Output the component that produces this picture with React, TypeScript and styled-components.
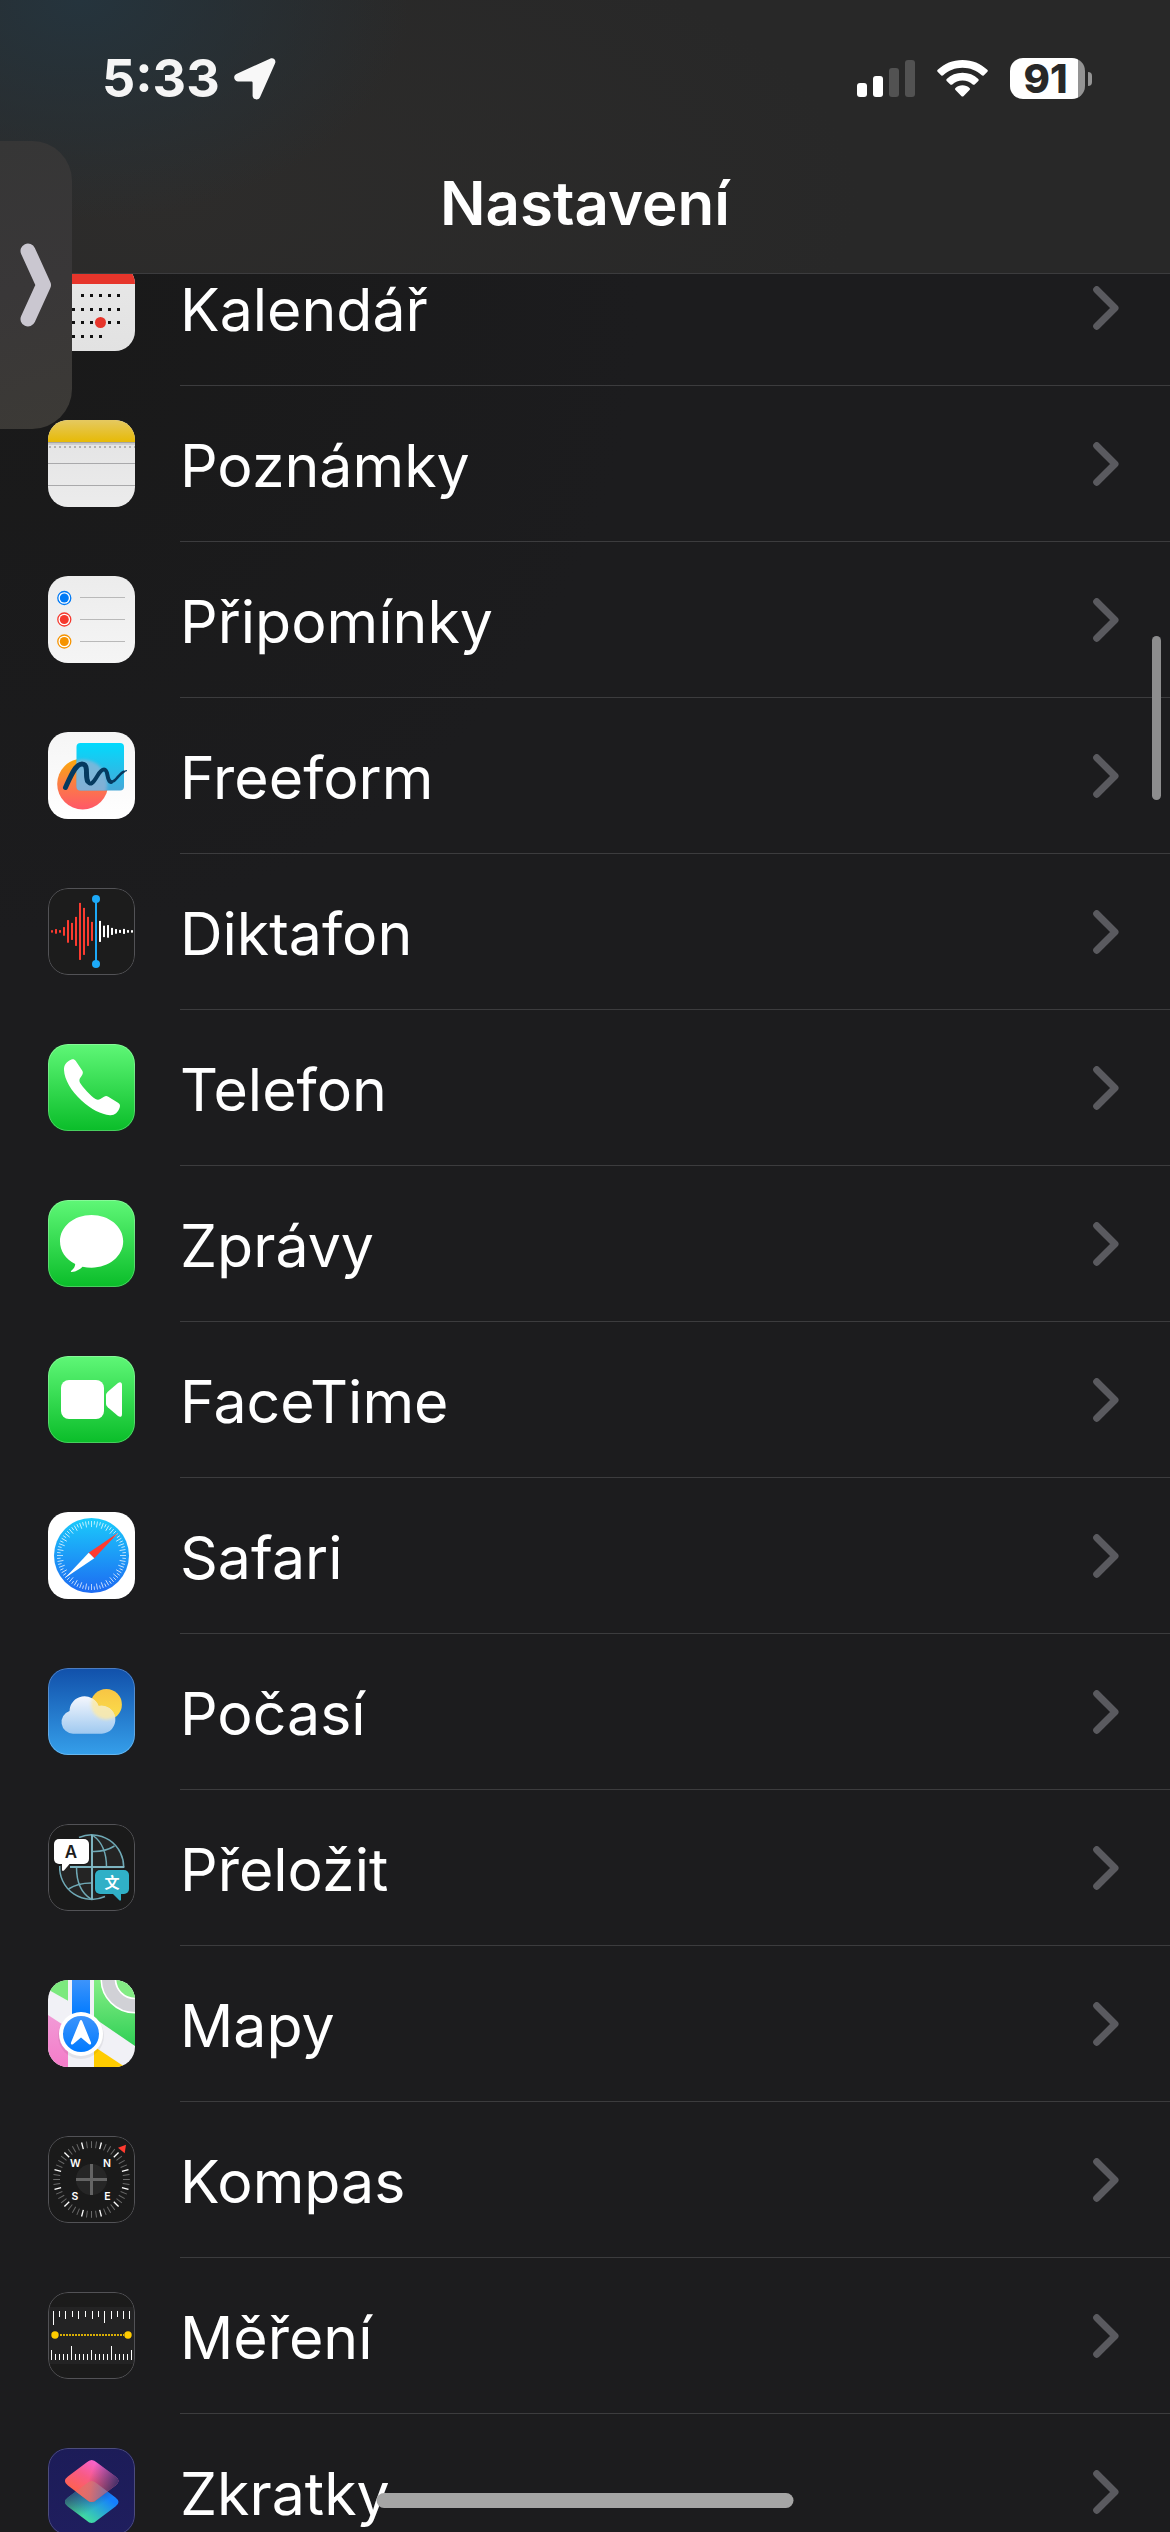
import React from "react";
import styled, { createGlobalStyle } from "styled-components";

const GlobalStyle = createGlobalStyle`
  *, *::before, *::after { box-sizing: border-box; }
  html, body { margin: 0; background: #1c1c1e; }
  body {
    font-family: Inter, "Liberation Sans", "Noto Sans CJK SC", sans-serif;
    color: #fff;
  }
`;

const Screen = styled.div`
  position: relative;
  display: flex;
  flex-direction: column;
  height: 100vh;
  overflow: hidden;
  background: radial-gradient(circle at 0 300px, #191919 0, #1c1c1e 640px);
`;

const Header = styled.header`
  flex: none;
  z-index: 1;
  border-bottom: 1px solid #3c3c3e;
  background:
    radial-gradient(ellipse 330px 220px at 80px 0, #25343d 0, rgba(37, 52, 61, 0) 100%),
    radial-gradient(ellipse 700px 300px at 160px 200px, #2d2c2b 0, #282828 100%);
`;

const StatusBar = styled.div`
  display: flex;
  align-items: center;
  justify-content: space-between;
  height: 141px;
  padding: 16px 78px 0 102px;
`;

const StatusGroup = styled.div<{ $gap: number }>`
  display: flex;
  align-items: center;
  gap: ${(p) => p.$gap}px;
`;

const Time = styled.time`
  font-size: 52px;
  line-height: 60px;
  font-weight: 700;
  color: #f5f5f5;
`;

const Battery = styled.div`
  display: flex;
  align-items: center;
  gap: 3px;
`;

const BatteryBody = styled.div`
  display: flex;
  align-items: center;
  justify-content: center;
  width: 75px;
  height: 41px;
  padding-right: 4px;
  border-radius: 13px;
  background: linear-gradient(to right, #fff 68px, #949494 68px);
  color: #282828;
  font-size: 40px;
  line-height: 41px;
  font-weight: 800;
`;

const BatteryTip = styled.div`
  width: 4px;
  height: 14px;
  border-radius: 0 7px 7px 0;
  background: #949494;
`;

const Title = styled.h1`
  margin: 0;
  height: 132px;
  padding-top: 22px;
  font-size: 60px;
  line-height: 80px;
  font-weight: 600;
  text-align: center;
`;

const List = styled.ul`
  flex: none;
  margin: -44px 0 0;
  padding: 0;
  list-style: none;
`;

const Row = styled.a`
  display: flex;
  align-items: stretch;
  gap: 45px;
  height: 156px;
  padding-left: 48px;
  color: inherit;
  text-decoration: none;
`;

const RowBody = styled.span`
  flex: 1;
  display: flex;
  align-items: center;
  justify-content: space-between;
  padding-right: 51px;
  border-bottom: 1px solid #3c3c3e;
`;

const Label = styled.span`
  padding-top: 4px;
  font-size: 59px;
  line-height: 80px;
  font-weight: 400;
`;

const IconBox = styled.svg`
  flex: none;
  display: block;
  width: 87px;
  height: 87px;
  margin-top: 34px;
  border-radius: 20px;
`;

const SideTab = styled.button`
  position: absolute;
  z-index: 2;
  left: 0;
  top: 141px;
  display: flex;
  align-items: center;
  justify-content: flex-end;
  width: 72px;
  height: 288px;
  padding: 0 20px 0 0;
  border: 0;
  border-radius: 0 40px 40px 0;
  background: linear-gradient(165deg, #363636 0, #393738 50%, #3c3a36 100%);
`;

const ScrollThumb = styled.div`
  position: absolute;
  z-index: 2;
  right: 9px;
  top: 636px;
  width: 9px;
  height: 164px;
  border-radius: 5px;
  background: #8d8d8e;
`;

const HomeIndicator = styled.div`
  position: absolute;
  z-index: 2;
  left: 50%;
  bottom: 24px;
  width: 417px;
  height: 15px;
  border-radius: 8px;
  background: #a5a5a5;
  transform: translateX(-50%);
`;

type IconProps = { id: string; from: string; to: string; edge?: string; children?: React.ReactNode };

/* Rounded app tile with a vertical background gradient and a hairline edge. */
function Tile({ id, from, to, edge, children }: IconProps) {
  return (
    <IconBox viewBox="0 0 87 87" aria-hidden="true">
      <defs>
        <linearGradient id={id} x1="0" y1="0" x2="0" y2="1">
          <stop offset="0" stopColor={from} />
          <stop offset="1" stopColor={to} />
        </linearGradient>
      </defs>
      <rect width="87" height="87" fill={`url(#${id})`} />
      {children}
      {edge && <rect x=".5" y=".5" width="86" height="86" rx="19.5" fill="none" stroke={edge} />}
    </IconBox>
  );
}

const DARK_EDGE = "#525256";

const calendarRows = [
  { y: 31.5, from: 2, to: 6 },
  { y: 45.5, from: 0, to: 6 },
  { y: 58.5, from: 0, to: 6 },
  { y: 72.5, from: 0, to: 4 },
];

const Calendar = () => (
  <Tile id="cal" from="#e8e8e8" to="#e2e2e2">
    <rect width="87" height="20" fill="#e6352b" />
    {calendarRows.map((r) =>
      Array.from({ length: r.to - r.from + 1 }, (_, i) => (
        <rect key={`${r.y}-${i}`} x={15 + (r.from + i) * 9} y={r.y - 1.5} width="3" height="3" fill="#111" />
      ))
    )}
    <circle cx="52.5" cy="58.5" r="5.5" fill="#e6352b" />
  </Tile>
);

const Notes = () => (
  <Tile id="notes" from="#e2e2e3" to="#ececec">
    <defs>
      <linearGradient id="notesTop" x1="0" y1="0" x2="0" y2="1">
        <stop offset="0" stopColor="#e5c961" />
        <stop offset="1" stopColor="#e7ba06" />
      </linearGradient>
    </defs>
    <rect width="87" height="22" fill="url(#notesTop)" />
    <rect y="22" width="87" height="1.5" fill="#a5a5a5" />
    <rect y="23.5" width="87" height="1.5" fill="#cfcfcf" />
    <path d="M1 27H87" stroke="#b2b2b2" strokeWidth="2" strokeDasharray="2 3" />
    <path d="M0 43.5H87M0 65.5H87" stroke="#a9a9ab" />
  </Tile>
);

const reminderRows = [
  { y: 22, line: 21.5, color: "#007af5" },
  { y: 43.5, line: 43.5, color: "#f5392e" },
  { y: 65.5, line: 65.5, color: "#f59300" },
];

const Reminders = () => (
  <Tile id="rem" from="#ececec" to="#f5f5f5">
    {reminderRows.map((r) => (
      <g key={r.color}>
        <circle cx="16.3" cy={r.y} r="6.5" fill="#fff" stroke={r.color} strokeWidth="1.3" />
        <circle cx="16.3" cy={r.y} r="4.5" fill={r.color} />
        <path d={`M32 ${r.line}H77`} stroke="#b9b9b9" />
      </g>
    ))}
  </Tile>
);

const Freeform = () => (
  <Tile id="free" from="#f5f5f5" to="#ffffff">
    <defs>
      <linearGradient id="freeSun" x1="0" y1="0" x2="0" y2="1">
        <stop offset="0" stopColor="#fbab09" />
        <stop offset=".5" stopColor="#fb7d45" />
        <stop offset="1" stopColor="#ff5768" />
      </linearGradient>
      <linearGradient id="freeSq" x1="0" y1="0" x2="0" y2="1">
        <stop offset="0" stopColor="#02dafd" />
        <stop offset="1" stopColor="#46a8d8" />
      </linearGradient>
      <clipPath id="freeClip">
        <rect x="28.5" y="11" width="47.5" height="47.5" rx="4" />
      </clipPath>
      <filter id="freeBlur">
        <feGaussianBlur stdDeviation="1.6" />
      </filter>
    </defs>
    <circle cx="34.7" cy="52" r="25.5" fill="url(#freeSun)" />
    <rect x="28.5" y="11" width="47.5" height="47.5" rx="4" fill="url(#freeSq)" />
    <g clipPath="url(#freeClip)">
      <circle cx="34.7" cy="52" r="24.5" fill="#a3b2d3" opacity=".65" filter="url(#freeBlur)" />
    </g>
    <g fill="none" stroke="#053a60" strokeLinecap="round" strokeLinejoin="round">
      <path d="M17.5 55.5C22 46 27 32 34 32C41 32 37 43 39.5 49" strokeWidth="5" />
      <path d="M38.5 42C39 50 41 53 44 51C49 47 51 37.5 56 37.5C61 37.5 58 49 63 50" strokeWidth="4" />
      <path d="M60.5 47C62 51.5 66 50 69 46C71.5 43 73 41 75.5 39.8" strokeWidth="2.6" />
      <path d="M73 41.5C75 39.8 77 39 78.5 38.7" strokeWidth="1.2" />
    </g>
  </Tile>
);

const waveLeft = [1.2, 2.3, 1.3, 4.3, 11.3, 8.5, 14.5, 28.5, 23.5, 14.5, 9.5];
const waveRight = [10.5, 5.7, 6.3, 3.5, 2.3, 1.5, 2.5, 1.3, 1.2];

const VoiceMemos = () => (
  <Tile id="voice" from="#1c1c1c" to="#1c1c1c" edge={DARK_EDGE}>
    {waveLeft.map((h, i) => (
      <rect key={i} x={3 + i * 4} y={43.4 - h} width="2" height={h * 2} fill="#fb3b30" />
    ))}
    {waveRight.map((h, i) => (
      <rect key={i} x={51 + i * 4} y={43.4 - h} width="2" height={h * 2} fill="#fff" />
    ))}
    <path d="M48 11V76" stroke="#1da9f8" strokeWidth="2" />
    <circle cx="48" cy="11" r="4" fill="#1da9f8" />
    <circle cx="48" cy="76" r="4" fill="#1da9f8" />
  </Tile>
);

const Green = ({ id, children }: { id: string; children: React.ReactNode }) => (
  <Tile id={id} from="#5ff777" to="#0abd29" edge="rgba(255,255,255,.25)">
    {children}
  </Tile>
);

const Phone = () => (
  <Green id="phone">
    <path
      d="M23 15.7C25 14.8 26.5 15.2 27.8 17L34 26.3C35.3 28.2 35 29.5 34 31.2L32 34.3C31.2 35.8 31.2 37.2 32 38.7C34.5 43 43 52.3 47.5 55C49.2 56 50.8 56 52.3 55L56 52.7C57.5 51.8 58.7 51.8 60.3 52.7L70 58.8C72 60.2 72.4 61.3 71.7 63.5C70 68.5 66.5 71.5 62 71.2C53 70.5 43.5 65.5 33.5 56.5C23 47 16.5 35.5 16 26C15.8 21 18.5 17.5 23 15.7Z"
      fill="#fff"
    />
  </Green>
);

const Messages = () => (
  <Green id="msg">
    <path
      d="M43.5 15C61 15 75.2 26.5 75.2 41.3S61 67.7 43.5 67.7C40.5 67.7 37.5 67.4 34.5 66.8C32 69.5 27.5 72 23.5 72C22.7 72 22.7 71.2 23.3 70.8C25.5 69 27.3 66.5 27.2 64C17.5 59.5 12 51 12 41.3C12 26.5 26 15 43.5 15Z"
      fill="#fff"
    />
  </Green>
);

const FaceTime = () => (
  <Green id="ft">
    <rect x="13" y="24" width="43" height="39" rx="8" fill="#fff" />
    <path d="M58 39.5C58 38 58.5 37 59.8 35.8L70 27C72 25.5 74 26 74 29V58C74 61 72 61.5 70 60L59.8 51.2C58.5 50 58 49 58 47.5Z" fill="#fff" />
  </Green>
);

const Safari = () => (
  <Tile id="saf" from="#ffffff" to="#ffffff">
    <defs>
      <linearGradient id="safDial" x1="0" y1="0" x2="0" y2="1">
        <stop offset="0" stopColor="#1bcbfb" />
        <stop offset="1" stopColor="#1d6af2" />
      </linearGradient>
    </defs>
    <circle cx="43.5" cy="43.5" r="37.5" fill="url(#safDial)" />
    {Array.from({ length: 72 }, (_, i) => (
      <path
        key={i}
        d={`M43.5 9V${i % 2 ? 12.5 : 15}`}
        stroke="#fff"
        strokeOpacity=".85"
        strokeWidth=".8"
        transform={`rotate(${i * 5} 43.5 43.5)`}
      />
    ))}
    <path d="M70.5 20.5L40.7 40.7L46.3 46.3Z" fill="#ff3b30" />
    <path d="M17 66L40.7 40.7L46.3 46.3Z" fill="#fff" />
  </Tile>
);

const CLOUD = "M25 65.7A11.7 11.7 0 0 1 21.5 42.9A15 15 0 0 1 50.5 38A14 14 0 1 1 53.7 65.7Z";

const Weather = () => (
  <Tile id="wea" from="#1150aa" to="#359fea" edge="rgba(255,255,255,.25)">
    <defs>
      <linearGradient id="weaSun" x1="0" y1="0" x2="0" y2="1">
        <stop offset="0" stopColor="#f8c544" />
        <stop offset="1" stopColor="#fbdf4b" />
      </linearGradient>
      <linearGradient id="weaCloud" x1="0" y1="0" x2="0" y2="1">
        <stop offset="0" stopColor="#f5f7fd" />
        <stop offset="1" stopColor="#9fc9f0" />
      </linearGradient>
      <clipPath id="weaClip">
        <path d={CLOUD} />
      </clipPath>
      <filter id="weaBlur">
        <feGaussianBlur stdDeviation="1.8" />
      </filter>
    </defs>
    <circle cx="58.3" cy="36.5" r="15.6" fill="url(#weaSun)" />
    <path d={CLOUD} fill="url(#weaCloud)" />
    <g clipPath="url(#weaClip)">
      <circle cx="58.3" cy="36.5" r="15" fill="#fbe9a6" opacity=".85" filter="url(#weaBlur)" />
    </g>
  </Tile>
);

const Translate = () => (
  <Tile id="tra" from="#1a1a1a" to="#1a1a1a" edge={DARK_EDGE}>
    <circle cx="43.7" cy="43.2" r="32" fill="#242424" />
    <g fill="none" stroke="#6fa9b6" strokeWidth="1.5">
      <path d="M31 13.5A32 32 0 0 1 75.7 43.2M11.7 42A32 32 0 0 0 57 72.5" />
      <path d="M45 11.5C54 18 58.5 29 58.5 43M44 27.5C53 28 60 26 66.5 22" />
      <path d="M43 75C33 69 28.5 58 28.5 43M43 59C33 59 26 61.5 20.5 65" />
    </g>
    <path d="M44 11V75.5M22 43H76.3" stroke="#7db4c0" strokeWidth="2" />
    <rect x="46" y="45" width="36" height="26" rx="6" fill="#1a1a1a" />
    <rect x="47" y="46" width="34" height="24" rx="5" fill="#30b0c7" />
    <path d="M64.5 69.5H73V75.5C73 76.8 72 77 71 76Z" fill="#30b0c7" />
    <rect x="5" y="14" width="37" height="27" rx="6" fill="#1a1a1a" />
    <rect x="6" y="15" width="35" height="25" rx="5" fill="#fff" />
    <path d="M14 39.5H22L16 46.5C15 47.4 14 47 14 45.8Z" fill="#fff" />
    <text x="23" y="34" fontSize="17" fontWeight="600" textAnchor="middle" fill="#1c1c1c">A</text>
    <text x="64" y="63.5" fontSize="15" fontWeight="700" textAnchor="middle" fill="#fff" fontFamily='"Noto Sans CJK SC", sans-serif'>文</text>
  </Tile>
);

const Maps = () => (
  <Tile id="map" from="#f1f1f6" to="#f1f1f6">
    <defs>
      <linearGradient id="mapGreen" x1="0" y1="0" x2="0" y2="1">
        <stop offset="0" stopColor="#86ee86" />
        <stop offset="1" stopColor="#2fcf55" />
      </linearGradient>
      <linearGradient id="mapBlue" x1="0" y1="0" x2="0" y2="1">
        <stop offset="0" stopColor="#3d94fb" />
        <stop offset="1" stopColor="#007aff" />
      </linearGradient>
      <linearGradient id="mapPink" x1="0" y1="0" x2="0" y2="1">
        <stop offset="0" stopColor="#f19ad6" />
        <stop offset="1" stopColor="#f47cc9" />
      </linearGradient>
    </defs>
    <path d="M0 0H20V20.7L0 9.5Z" fill="#7ce97e" />
    <path d="M46 0H87V66L46 38Z" fill="url(#mapGreen)" />
    <path d="M0 35L20 48V87H0Z" fill="url(#mapPink)" />
    <path d="M46 66.5L77 87H46Z" fill="#ffcc00" />
    <path d="M24 0H42V36H24Z" fill="url(#mapBlue)" />
    <circle cx="87" cy="-1" r="33.8" fill="#d1d1d6" stroke="#fff" strokeWidth="1.5" />
    <circle cx="87" cy="-1" r="19.5" fill="#83ec84" stroke="#fff" strokeWidth="1.7" />
    <circle cx="33" cy="56" r="23" fill="#000" opacity=".06" />
    <circle cx="33" cy="54" r="22" fill="#fff" />
    <circle cx="33" cy="54" r="18" fill="url(#mapBlue)" />
    <path d="M31.8 41C32.3 39.7 33.7 39.7 34.2 41L43 62.5C43.5 64.2 42.3 65 41 64.2L33 57.5L25 64.2C23.7 65 22.5 64.2 23 62.5Z" fill="#fff" />
  </Tile>
);

const compassLetters = [
  { t: "W", x: 27.3, y: 31 },
  { t: "N", x: 59, y: 31 },
  { t: "S", x: 27, y: 64 },
  { t: "E", x: 59.5, y: 64 },
];

const Compass = () => (
  <Tile id="com" from="#1a1a1a" to="#1a1a1a" edge={DARK_EDGE}>
    {Array.from({ length: 48 }, (_, i) => {
      const major = i % 4 === 2;
      return (
        <path
          key={i}
          d="M43.5 5.2V12"
          stroke={major ? "#fff" : "#6a6a6a"}
          strokeWidth={major ? 1.3 : 1}
          transform={`rotate(${i * 7.5} 43.5 43.5)`}
        />
      );
    })}
    <circle cx="43.5" cy="43.5" r="15.5" fill="#262626" />
    <path d="M43.5 28V59M28 43.5H59" stroke="#646464" strokeWidth="3" />
    {compassLetters.map((l) => (
      <text key={l.t} x={l.x} y={l.y} fontSize="10.5" fontWeight="600" textAnchor="middle" fill="#fff">
        {l.t}
      </text>
    ))}
    <path d="M70 11.8L78 8.7L76.7 17.3Z" fill="#ff3b30" />
  </Tile>
);

const upperX = [5, 11, 17, 24, 30, 37, 44, 50, 56, 63, 69, 75, 81];
const upperLen = [14, 6, 8, 6, 8, 6, 8, 6, 12, 8, 6, 8, 8];

const Measure = () => (
  <Tile id="mea" from="#1b1b1b" to="#1b1b1b" edge={DARK_EDGE}>
    <rect x="1" y="15" width="85" height="57" fill="#232324" />
    {upperX.map((x, i) => (
      <rect key={x} x={x} y="19" width="1" height={upperLen[i]} fill="#fff" />
    ))}
    {Array.from({ length: 21 }, (_, i) => {
      const h = i % 10 === 0 ? 10 : i % 5 === 0 ? 14 : 6;
      return <rect key={i} x={3 + i * 4} y={68 - h} width="1" height={h} fill="#fff" />;
    })}
    <path d="M12 43H76" stroke="#d9ae05" strokeWidth="2" strokeDasharray="2 1" />
    <circle cx="7" cy="43" r="3.7" fill="#ffcc00" />
    <circle cx="80" cy="43" r="3.7" fill="#ffcc00" />
  </Tile>
);

const diamond = (cy: number) =>
  `M38.5 ${cy - 18.5}Q43.7 ${cy - 23.5} 48.9 ${cy - 18.5}L67.5 ${cy - 4.5}Q73.5 ${cy} 67.5 ${cy + 4.5}L48.9 ${cy + 18.5}Q43.7 ${cy + 23.5} 38.5 ${cy + 18.5}L19.9 ${cy + 4.5}Q13.9 ${cy} 19.9 ${cy - 4.5}Z`;

const Shortcuts = () => (
  <Tile id="sho" from="#1c1c58" to="#1f1e5e" edge="#4c4c7c">
    <defs>
      <linearGradient id="shoTop" x1=".1" y1=".75" x2=".65" y2="0">
        <stop offset="0" stopColor="#ff6248" />
        <stop offset=".5" stopColor="#f85b85" />
        <stop offset="1" stopColor="#f764dc" />
      </linearGradient>
      <linearGradient id="shoTopShade" x1=".45" y1=".45" x2=".95" y2=".6">
        <stop offset="0" stopColor="#2c2a5e" stopOpacity="0" />
        <stop offset="1" stopColor="#2c2a5e" stopOpacity=".85" />
      </linearGradient>
      <linearGradient id="shoBot" x1=".3" y1=".9" x2=".8" y2=".4">
        <stop offset="0" stopColor="#45e39a" />
        <stop offset="1" stopColor="#1580fd" />
      </linearGradient>
      <linearGradient id="shoBotShade" x1=".5" y1=".7" x2=".1" y2=".2">
        <stop offset="0" stopColor="#2c2a5e" stopOpacity="0" />
        <stop offset="1" stopColor="#2c2a5e" stopOpacity=".85" />
      </linearGradient>
      <linearGradient id="shoMix" x1="0" y1=".4" x2="1" y2=".5">
        <stop offset="0" stopColor="#fb6354" />
        <stop offset=".5" stopColor="#d97273" />
        <stop offset="1" stopColor="#5877c4" />
      </linearGradient>
      <clipPath id="shoClip">
        <path d={diamond(54)} />
      </clipPath>
    </defs>
    <path d={diamond(54)} fill="url(#shoBot)" />
    <path d={diamond(54)} fill="url(#shoBotShade)" />
    <path d={diamond(33)} fill="url(#shoTop)" />
    <path d={diamond(33)} fill="url(#shoTopShade)" />
    <g clipPath="url(#shoClip)">
      <path d={diamond(33)} fill="url(#shoMix)" opacity=".85" />
    </g>
  </Tile>
);

const items = [
  { label: "Kalendář", Icon: Calendar },
  { label: "Poznámky", Icon: Notes },
  { label: "Připomínky", Icon: Reminders },
  { label: "Freeform", Icon: Freeform },
  { label: "Diktafon", Icon: VoiceMemos },
  { label: "Telefon", Icon: Phone },
  { label: "Zprávy", Icon: Messages },
  { label: "FaceTime", Icon: FaceTime },
  { label: "Safari", Icon: Safari },
  { label: "Počasí", Icon: Weather },
  { label: "Přeložit", Icon: Translate },
  { label: "Mapy", Icon: Maps },
  { label: "Kompas", Icon: Compass },
  { label: "Měření", Icon: Measure },
  { label: "Zkratky", Icon: Shortcuts },
];

const Chevron = () => (
  <svg width="26" height="44" viewBox="0 0 26 44" aria-hidden="true">
    <path d="M3.7 3.7L22 22L3.7 40.3" fill="none" stroke="#5a5a5f" strokeWidth="7" strokeLinecap="round" strokeLinejoin="round" />
  </svg>
);

const LocationArrow = () => (
  <svg width="42" height="42" viewBox="0 0 42 42" aria-hidden="true">
    <path d="M36 .7C39.5 -.8 42.5 2 41 5.6L26 39.2C24.4 42.6 19 42 18.6 38V25C18.6 23.8 18.2 23.4 17 23.4H3.8C-.2 23 -1.2 17.8 2.4 16Z" fill="#f8f8f8" />
  </svg>
);

const Signal = () => (
  <svg width="58" height="37" viewBox="0 0 58 37" aria-hidden="true">
    <rect x="0" y="23" width="10" height="14" rx="3" fill="#fff" />
    <rect x="16" y="16" width="10" height="21" rx="3" fill="#fff" />
    <rect x="32" y="8" width="10" height="29" rx="3" fill="#525252" />
    <rect x="48" y="0" width="10" height="37" rx="3" fill="#525252" />
  </svg>
);

const Wifi = () => (
  <svg width="51" height="37" viewBox="0 0 51 37" aria-hidden="true" fill="#fff">
    <path d="M25.5 0C35.3 0 43.8 3.7 50.3 9.8Q51.3 10.8 50.4 11.8L46.7 15.4Q45.8 16.2 44.8 15.3C39.5 10.4 32.9 7.7 25.5 7.7S11.5 10.4 6.2 15.3Q5.2 16.2 4.3 15.4L.6 11.8Q-.3 10.8 .7 9.8C7.2 3.7 15.7 0 25.5 0Z" />
    <path d="M25.5 12.8C31.7 12.8 37 15 41.3 18.9Q42.3 19.9 41.3 20.9L37.7 24.4Q36.8 25.3 35.7 24.4C32.9 22 29.5 20.5 25.5 20.5S18.1 22 15.3 24.4Q14.2 25.3 13.3 24.4L9.7 20.9Q8.7 19.9 9.7 18.9C14 15 19.3 12.8 25.5 12.8Z" />
    <path d="M25.5 25.3C28.2 25.3 30.7 26.3 32.5 27.9Q33.5 28.9 32.5 29.9L26.7 35.9Q25.5 37.2 24.3 35.9L18.5 29.9Q17.5 28.9 18.5 27.9C20.3 26.3 22.8 25.3 25.5 25.3Z" />
  </svg>
);

export default function App() {
  return (
    <>
      <GlobalStyle />
      <Screen>
        <Header>
          <StatusBar>
            <StatusGroup $gap={14}>
              <Time>5:33</Time>
              <LocationArrow />
            </StatusGroup>
            <StatusGroup $gap={22}>
              <Signal />
              <Wifi />
              <Battery>
                <BatteryBody>91</BatteryBody>
                <BatteryTip />
              </Battery>
            </StatusGroup>
          </StatusBar>
          <Title>Nastavení</Title>
        </Header>
        <List>
          {items.map(({ label, Icon }) => (
            <li key={label}>
              <Row href={`#${label}`}>
                <Icon />
                <RowBody>
                  <Label>{label}</Label>
                  <Chevron />
                </RowBody>
              </Row>
            </li>
          ))}
        </List>
        <SideTab type="button" aria-label="Zobrazit plovoucí okno">
          <svg width="32" height="84" viewBox="0 0 32 84" aria-hidden="true">
            <path d="M8 8L23.5 42L8 76" fill="none" stroke="#cac7d0" strokeWidth="15" strokeLinecap="round" strokeLinejoin="round" />
          </svg>
        </SideTab>
        <ScrollThumb />
        <HomeIndicator />
      </Screen>
    </>
  );
}
